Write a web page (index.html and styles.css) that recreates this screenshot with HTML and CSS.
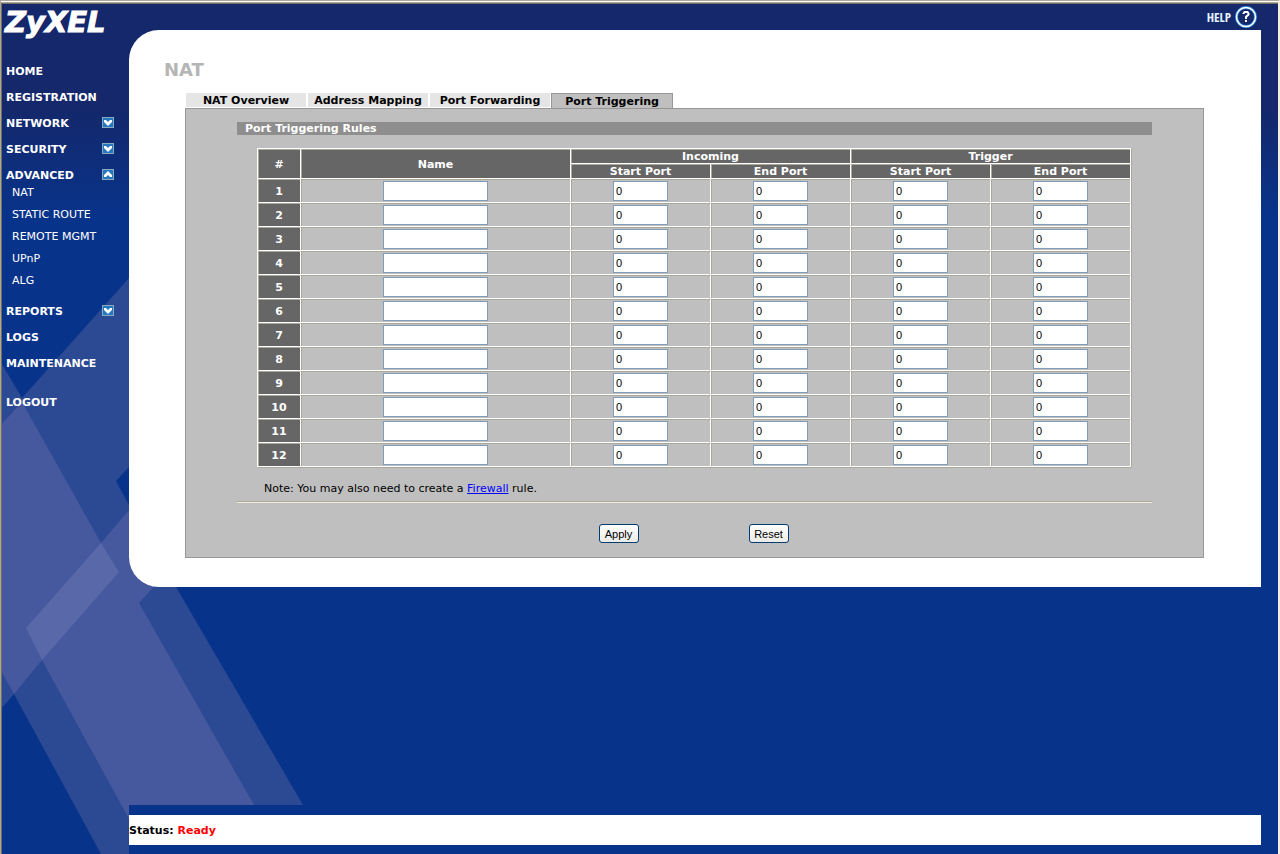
FILE: index.html
```
<!DOCTYPE html>
<html lang="en">
<head>
  <meta charset="UTF-8" />
  <meta name="viewport" content="width=device-width, initial-scale=1.0"/>
  <title>ZyXEL - NAT</title>
  <link rel="stylesheet" href="styles.css">
</head>
<body>

  <!-- Background shapes -->
  <svg class="backdrop" width="308" height="854" viewBox="2 0 308 854" aria-hidden="true">
    <polygon fill="#2c4a93" points="0,361 22,398 129,278 129,467 116,481 129,505 160,505 160,587 176,587 303,805 129,805 129,854 101,854 14,694 0,710" />
    <polygon fill="#46599f" points="0,426 22,402 101,543 129,510 160,510 160,580 139,603 254,805 129,805 129,819 42,660 14,694 0,669" />
    <polygon fill="#5868a8" points="101,543 119,572 42,660 26,628" />
  </svg>

  <!-- Sidebar -->
  <div class="sidebar">
    <a class="logo" href="#">ZyXEL</a>
    <ul class="menu">
      <li><a href="#">HOME</a></li>
      <li><a href="#">REGISTRATION</a></li>
      <li>
        <a href="#">NETWORK</a>
        <svg class="arrow" viewBox="0 0 12 11"><rect x=".5" y=".5" width="11" height="10" /><path d="M2 3 H4 L6 5 L8 3 H10 V5 L6 9 L2 5 Z" /></svg>
      </li>
      <li>
        <a href="#">SECURITY</a>
        <svg class="arrow" viewBox="0 0 12 11"><rect x=".5" y=".5" width="11" height="10" /><path d="M2 3 H4 L6 5 L8 3 H10 V5 L6 9 L2 5 Z" /></svg>
      </li>
      <li>
        <a href="#">ADVANCED</a>
        <svg class="arrow" viewBox="0 0 12 11"><rect x=".5" y=".5" width="11" height="10" /><path d="M2 8 H4 L6 6 L8 8 H10 V6 L6 2 L2 6 Z" /></svg>
      </li>
    </ul>
    <ul class="submenu">
      <li><a href="#">NAT</a></li>
      <li><a href="#">STATIC ROUTE</a></li>
      <li><a href="#">REMOTE MGMT</a></li>
      <li><a href="#">UPnP</a></li>
      <li><a href="#">ALG</a></li>
    </ul>
    <ul class="menu">
      <li>
        <a href="#">REPORTS</a>
        <svg class="arrow" viewBox="0 0 12 11"><rect x=".5" y=".5" width="11" height="10" /><path d="M2 3 H4 L6 5 L8 3 H10 V5 L6 9 L2 5 Z" /></svg>
      </li>
      <li><a href="#">LOGS</a></li>
      <li><a href="#">MAINTENANCE</a></li>
      <li class="logout"><a href="#">LOGOUT</a></li>
    </ul>
  </div>

  <!-- Right side -->
  <div class="page">
    <div class="topbar">
      <a class="help" href="#">
        HELP
        <svg width="22" height="22" viewBox="0 0 22 22">
          <circle cx="11" cy="11" r="9.500" fill="#14286b" stroke="#2f86d6" stroke-width="3" />
          <circle cx="11" cy="11" r="9.500" fill="none" stroke="#fff" stroke-width="1.500" />
          <path d="M8.500 8 V7.500 L9.500 6 H12.500 L13.500 7.500 V8.500 L11 11 V13" fill="none" stroke="#fff" stroke-width="2" />
          <rect x="10" y="14" width="2" height="2" fill="#fff" />
        </svg>
      </a>
    </div>

    <div class="content">
      <h1>NAT</h1>

      <div class="tabs">
        <a href="#">NAT Overview</a>
        <a href="#">Address Mapping</a>
        <a href="#">Port Forwarding</a>
        <a href="#" class="active">Port Triggering</a>
      </div>

      <form class="panel">
        <h2>Port Triggering Rules</h2>

        <table>
          <colgroup>
            <col class="col-num"><col><col class="col-port"><col class="col-port"><col class="col-port"><col class="col-port">
          </colgroup>
          <tr>
            <th rowspan="2">#</th>
            <th rowspan="2">Name</th>
            <th colspan="2">Incoming</th>
            <th colspan="2">Trigger</th>
          </tr>
          <tr>
            <th>Start Port</th>
            <th>End Port</th>
            <th>Start Port</th>
            <th>End Port</th>
          </tr>
          <tr>
            <th>1</th>
            <td><input type="text" class="name" aria-label="Name 1"></td>
            <td><input type="text" class="port" aria-label="Incoming start port 1" value="0"></td>
            <td><input type="text" class="port" aria-label="Incoming end port 1" value="0"></td>
            <td><input type="text" class="port" aria-label="Trigger start port 1" value="0"></td>
            <td><input type="text" class="port" aria-label="Trigger end port 1" value="0"></td>
          </tr>
          <tr>
            <th>2</th>
            <td><input type="text" class="name" aria-label="Name 2"></td>
            <td><input type="text" class="port" aria-label="Incoming start port 2" value="0"></td>
            <td><input type="text" class="port" aria-label="Incoming end port 2" value="0"></td>
            <td><input type="text" class="port" aria-label="Trigger start port 2" value="0"></td>
            <td><input type="text" class="port" aria-label="Trigger end port 2" value="0"></td>
          </tr>
          <tr>
            <th>3</th>
            <td><input type="text" class="name" aria-label="Name 3"></td>
            <td><input type="text" class="port" aria-label="Incoming start port 3" value="0"></td>
            <td><input type="text" class="port" aria-label="Incoming end port 3" value="0"></td>
            <td><input type="text" class="port" aria-label="Trigger start port 3" value="0"></td>
            <td><input type="text" class="port" aria-label="Trigger end port 3" value="0"></td>
          </tr>
          <tr>
            <th>4</th>
            <td><input type="text" class="name" aria-label="Name 4"></td>
            <td><input type="text" class="port" aria-label="Incoming start port 4" value="0"></td>
            <td><input type="text" class="port" aria-label="Incoming end port 4" value="0"></td>
            <td><input type="text" class="port" aria-label="Trigger start port 4" value="0"></td>
            <td><input type="text" class="port" aria-label="Trigger end port 4" value="0"></td>
          </tr>
          <tr>
            <th>5</th>
            <td><input type="text" class="name" aria-label="Name 5"></td>
            <td><input type="text" class="port" aria-label="Incoming start port 5" value="0"></td>
            <td><input type="text" class="port" aria-label="Incoming end port 5" value="0"></td>
            <td><input type="text" class="port" aria-label="Trigger start port 5" value="0"></td>
            <td><input type="text" class="port" aria-label="Trigger end port 5" value="0"></td>
          </tr>
          <tr>
            <th>6</th>
            <td><input type="text" class="name" aria-label="Name 6"></td>
            <td><input type="text" class="port" aria-label="Incoming start port 6" value="0"></td>
            <td><input type="text" class="port" aria-label="Incoming end port 6" value="0"></td>
            <td><input type="text" class="port" aria-label="Trigger start port 6" value="0"></td>
            <td><input type="text" class="port" aria-label="Trigger end port 6" value="0"></td>
          </tr>
          <tr>
            <th>7</th>
            <td><input type="text" class="name" aria-label="Name 7"></td>
            <td><input type="text" class="port" aria-label="Incoming start port 7" value="0"></td>
            <td><input type="text" class="port" aria-label="Incoming end port 7" value="0"></td>
            <td><input type="text" class="port" aria-label="Trigger start port 7" value="0"></td>
            <td><input type="text" class="port" aria-label="Trigger end port 7" value="0"></td>
          </tr>
          <tr>
            <th>8</th>
            <td><input type="text" class="name" aria-label="Name 8"></td>
            <td><input type="text" class="port" aria-label="Incoming start port 8" value="0"></td>
            <td><input type="text" class="port" aria-label="Incoming end port 8" value="0"></td>
            <td><input type="text" class="port" aria-label="Trigger start port 8" value="0"></td>
            <td><input type="text" class="port" aria-label="Trigger end port 8" value="0"></td>
          </tr>
          <tr>
            <th>9</th>
            <td><input type="text" class="name" aria-label="Name 9"></td>
            <td><input type="text" class="port" aria-label="Incoming start port 9" value="0"></td>
            <td><input type="text" class="port" aria-label="Incoming end port 9" value="0"></td>
            <td><input type="text" class="port" aria-label="Trigger start port 9" value="0"></td>
            <td><input type="text" class="port" aria-label="Trigger end port 9" value="0"></td>
          </tr>
          <tr>
            <th>10</th>
            <td><input type="text" class="name" aria-label="Name 10"></td>
            <td><input type="text" class="port" aria-label="Incoming start port 10" value="0"></td>
            <td><input type="text" class="port" aria-label="Incoming end port 10" value="0"></td>
            <td><input type="text" class="port" aria-label="Trigger start port 10" value="0"></td>
            <td><input type="text" class="port" aria-label="Trigger end port 10" value="0"></td>
          </tr>
          <tr>
            <th>11</th>
            <td><input type="text" class="name" aria-label="Name 11"></td>
            <td><input type="text" class="port" aria-label="Incoming start port 11" value="0"></td>
            <td><input type="text" class="port" aria-label="Incoming end port 11" value="0"></td>
            <td><input type="text" class="port" aria-label="Trigger start port 11" value="0"></td>
            <td><input type="text" class="port" aria-label="Trigger end port 11" value="0"></td>
          </tr>
          <tr>
            <th>12</th>
            <td><input type="text" class="name" aria-label="Name 12"></td>
            <td><input type="text" class="port" aria-label="Incoming start port 12" value="0"></td>
            <td><input type="text" class="port" aria-label="Incoming end port 12" value="0"></td>
            <td><input type="text" class="port" aria-label="Trigger start port 12" value="0"></td>
            <td><input type="text" class="port" aria-label="Trigger end port 12" value="0"></td>
          </tr>
        </table>

        <p class="note">Note: You may also need to create a <a href="#">Firewall</a> rule.</p>
        <hr>

        <div class="buttons">
          <button type="submit">Apply</button>
          <button type="reset">Reset</button>
        </div>
      </form>
    </div>

    <!-- Status bar -->
    <div class="status">Status: <span>Ready</span></div>
  </div>

</body>
</html>
```
FILE: styles.css
```
* {
  box-sizing: border-box;
}

body {
  margin: 0;
  display: flex;
  position: relative;
  min-height: 100vh;
  padding: 3px 0 0 1px;
  font-family: Verdana, "DejaVu Sans", sans-serif;
  font-size: 11px;
  line-height: 14px;
  background: linear-gradient(#14286b 110px, #08338a 215px);
  border-style: solid;
  border-width: 1px 2px 0 1px;
  border-color: #aca899 #f1efe2 #aca899 #aca899;
  box-shadow: inset 0 1px #fff, inset 0 2px #aca899, inset 1px 3px #716f64;
}

.backdrop {
  position: absolute;
  top: -1px;
  left: 1px;
}

/* Sidebar */
.sidebar {
  position: relative;
  width: 127px;
  flex-shrink: 0;
}

.sidebar a {
  color: #fff;
  text-decoration: none;
}

.sidebar .logo {
  display: block;
  height: 54px;
  padding-left: 3px;
  font-size: 29px;
  font-weight: bold;
  font-style: italic;
  line-height: 36px;
  -webkit-text-stroke: 1px #fff;
}

.menu, .submenu {
  list-style: none;
  margin: 0;
  padding: 0;
}

.menu li {
  display: flex;
  align-items: center;
  justify-content: space-between;
  height: 26px;
  padding: 0 15px 0 4px;
  font-weight: bold;
}

.menu a {
  padding-top: 1px;
}

.menu .logout {
  margin-top: 13px;
}

.submenu {
  padding-bottom: 4px;
  margin-top: -4px;
}

.submenu li {
  height: 22px;
  padding-left: 10px;
  line-height: 18px;
}

.arrow {
  width: 12px;
  height: 11px;
  margin-bottom: 1px;
}

.arrow rect {
  fill: #2378bf;
  stroke: #8aa9bd;
}

.arrow path {
  fill: #fff;
}

/* Right side */
.page {
  position: relative;
  flex: 1;
  display: flex;
  flex-direction: column;
  padding: 0 17px 9px 0;
}

.topbar {
  display: flex;
  justify-content: flex-end;
  height: 26px;
  padding: 2px 4px 0 0;
}

.help {
  display: flex;
  align-items: center;
  gap: 4px;
  height: 22px;
  color: #e4f3ff;
  font-family: "Open Sans Condensed", "Open Sans", sans-serif;
  font-size: 13px;
  font-weight: bold;
  text-decoration: none;
}

.content {
  padding: 30px 57px 29px 56px;
  background: #fff;
  border-radius: 30px 0 0 30px;
}

h1 {
  margin: 0 0 13px -21px;
  color: #b5b5b5;
  font-size: 18px;
  line-height: 20px;
}

/* Tabs */
.tabs {
  display: flex;
  align-items: flex-end;
  gap: 2px;
  padding-left: 1px;
}

.tabs a {
  width: 120px;
  height: 14px;
  margin-bottom: 1px;
  background: #e5e5e5;
  color: #000;
  font-weight: bold;
  line-height: 16px;
  text-align: center;
  text-decoration: none;
  white-space: nowrap;
}

.tabs .active {
  width: 122px;
  height: 15px;
  margin: 0 0 0 -1px;
  border: 1px solid #979797;
  border-bottom: none;
  background: #bfbfbf;
}

/* Panel */
.panel {
  padding: 13px 51px 14px;
  background: #bfbfbf;
  border: 1px solid #979797;
}

h2 {
  margin: 0 0 13px;
  padding: 1px 0 0 8px;
  background: #8e8e8e;
  color: #fff;
  font-size: 11px;
  line-height: 12px;
}

table {
  width: calc(100% - 41px);
  margin-left: 20px;
  table-layout: fixed;
  border-spacing: 0;
  border-right: 1px solid #fff;
  border-bottom: 1px solid #fff;
  box-shadow: 1px 1px #aca899;
}

.col-num {
  width: 43px;
}

.col-port {
  width: 140px;
}

th, td {
  padding: 1px 0 0;
  border-top: 1px solid #fff;
  border-left: 1px solid #fff;
  box-shadow: inset 1px 1px #aca899;
  text-align: center;
}

th {
  background: #666;
  color: #fff;
  line-height: 13px;
}

td {
  padding: 2px 0 1px;
}

input {
  display: block;
  height: 20px;
  margin: 0 auto;
  padding: 1px 2px;
  border: 1px solid #7f9db9;
  background: #fff;
  font-family: "Liberation Sans", Arial, sans-serif;
  font-size: 11px;
}

.name {
  width: 105px;
}

.port {
  width: 55px;
}

.note {
  margin: 15px 0 5px 27px;
}

.note a {
  color: #00f;
}

hr {
  margin: 0;
  border: 0;
  border-top: 1px solid #aca899;
  border-bottom: 1px solid #f1efe2;
}

.buttons {
  display: flex;
  justify-content: center;
  gap: 110px;
  margin: 21px 2px 0 0;
}

button {
  width: 40px;
  height: 19px;
  padding: 0;
  border: 1px solid #003c74;
  border-radius: 3px;
  background: linear-gradient(#fff, #ecebe5);
  color: #000;
  font-family: "Liberation Sans", Arial, sans-serif;
  font-size: 11px;
}

/* Status bar */
.status {
  margin-top: auto;
  padding: 9px 0 7px;
  background: #fff;
  font-weight: bold;
}

.status span {
  color: #f00;
}
```
